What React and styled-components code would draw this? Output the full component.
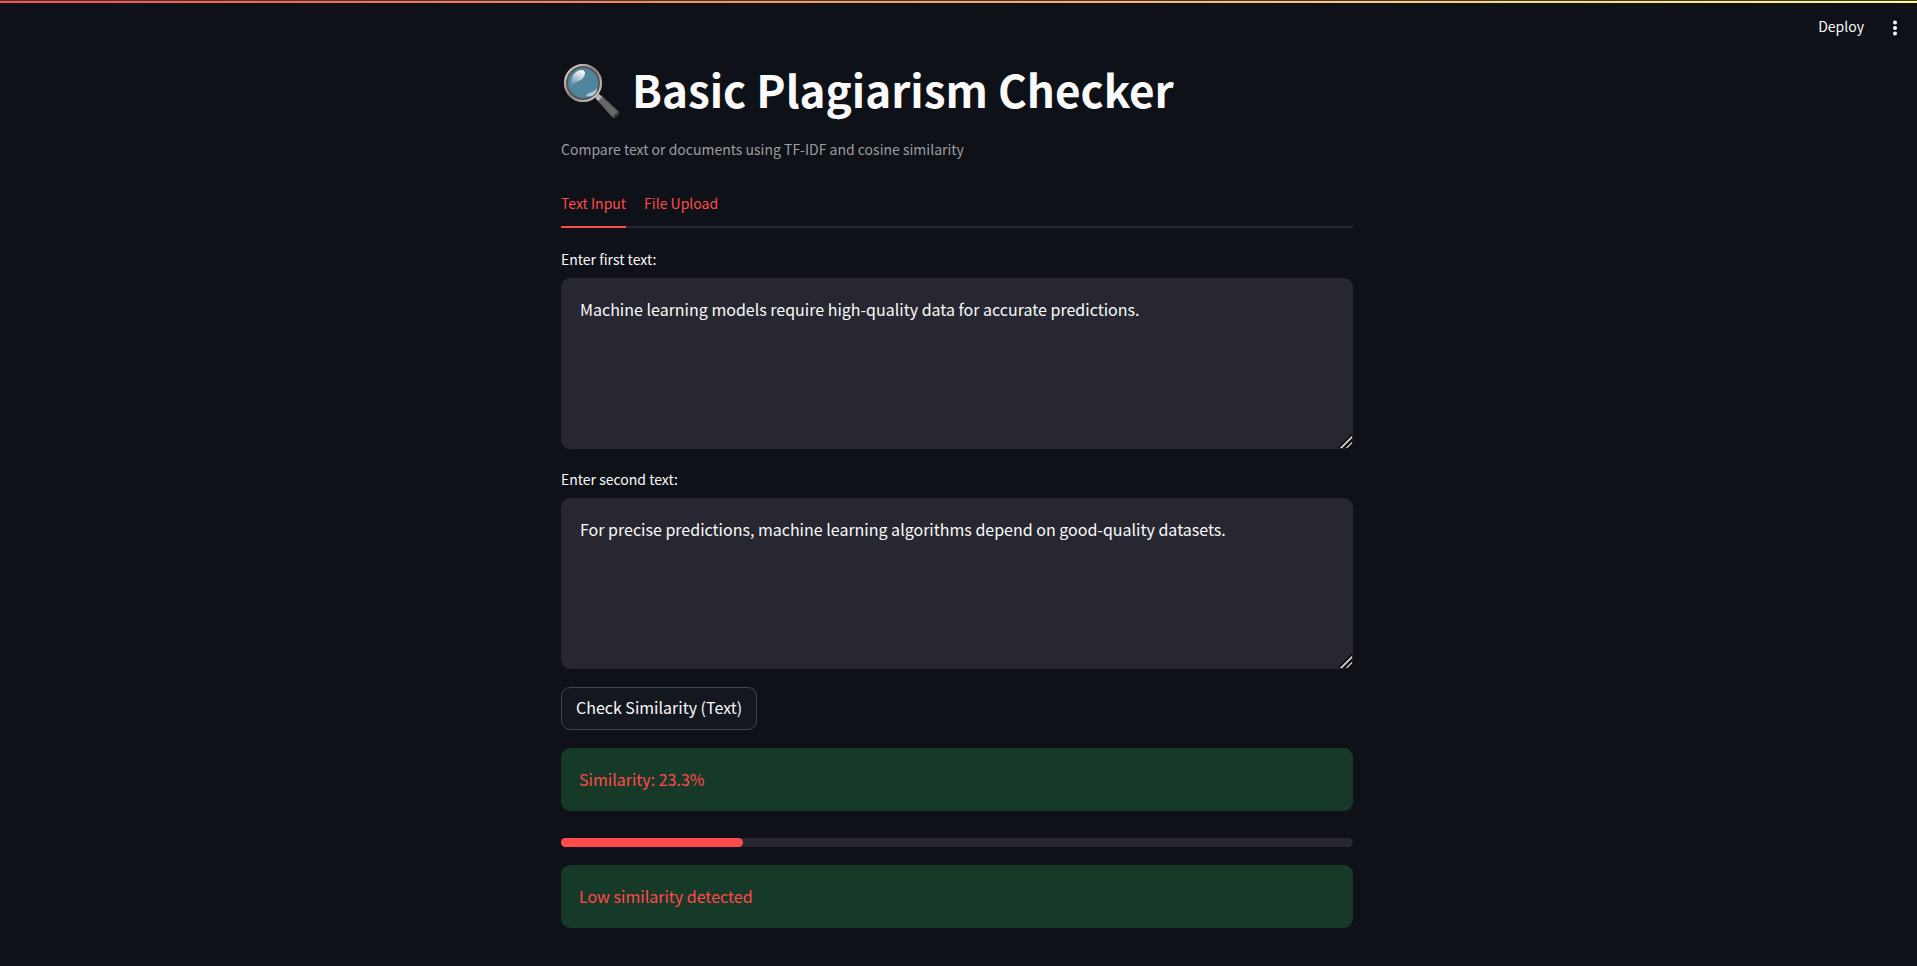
import React, { useState } from "react";
import styled, { createGlobalStyle } from "styled-components";

const Global = createGlobalStyle`
  *, *::before, *::after { box-sizing: border-box; }
  html { color-scheme: dark; background: #0e1117; }
  body {
    margin: 0;
    background: #0e1117;
    color: #fafafa;
    font-family: "Noto Sans CJK SC", sans-serif;
    font-size: 16px;
    line-height: 28px;
  }
  button, textarea { font: inherit; color: inherit; }
`;

const Decoration = styled.div`
  height: 3px;
  border-top: 1px solid #3b3b3f;
  background: linear-gradient(90deg, #ff4b4b, #fffd80);
`;

const Header = styled.header`
  display: flex;
  align-items: center;
  justify-content: flex-end;
  gap: 23px;
  height: 46px;
  padding-right: 14px;
`;

const HeaderButton = styled.button`
  display: flex;
  align-items: center;
  justify-content: center;
  padding: 0;
  border: 0;
  background: none;
  font-size: 14px;
  line-height: 24px;
  cursor: pointer;
`;

const Page = styled.main`
  width: 100%;
  max-width: 795px;
  margin: 0 auto;
  padding: 0 3px 38px 0;
`;

const Title = styled.h1`
  display: flex;
  align-items: flex-end;
  gap: 10px;
  margin: 0;
  padding: 10px 0 0 3px;
  font-size: 44px;
  font-weight: 700;
  line-height: 60px;
`;

const Caption = styled.p`
  margin: 18px 0 0;
  color: #9c9da0;
  font-size: 14px;
  line-height: 24px;
`;

const TabList = styled.div`
  display: flex;
  gap: 18px;
  margin: 18px 0 19px;
  border-bottom: 2px solid #262730;
`;

const Tab = styled.button`
  height: 49px;
  margin-bottom: -2px;
  padding: 0;
  border: 0;
  border-bottom: 2px solid ${(p) => (p.$active ? "#ff4b4b" : "transparent")};
  background: none;
  color: #ff4b4b;
  font-size: 14px;
  cursor: pointer;
`;

const Stack = styled.div`
  display: flex;
  flex-direction: column;
  align-items: stretch;
  gap: 18px;
`;

const Field = styled.div`
  display: flex;
  flex-direction: column;
  gap: 7px;
`;

const Label = styled.label`
  font-size: 14px;
  line-height: 24px;
`;

const TextArea = styled.textarea`
  display: block;
  width: 100%;
  height: 171px;
  padding: 16px 18px;
  border: 1px solid #262730;
  border-radius: 9px;
  outline: 0;
  background: #262730;
  resize: vertical;

  &::-webkit-resizer {
    background: linear-gradient(
      135deg,
      transparent 0 51%,
      #0b0b0d 51% 57%,
      #b4b4b6 57% 67%,
      #0b0b0d 67% 77%,
      #b4b4b6 77% 85%,
      transparent 85%
    );
  }
`;

const ActionButton = styled.button`
  align-self: flex-start;
  height: 43px;
  padding: 0 14px 3px;
  border: 1px solid #41444c;
  border-radius: 9px;
  background: #131720;
  cursor: pointer;
`;

const Alert = styled.div`
  padding: 18px;
  border-radius: 9px;
  background: #173928;
  color: #ff4b4b;
  line-height: 27px;
`;

const Progress = styled.div`
  height: 9px;
  margin-top: 9px;
  border-radius: 5px;
  background: #262730;
`;

const ProgressFill = styled.div`
  height: 100%;
  border-radius: 5px;
  background: #ff4b4b;
`;

const MagnifierIcon = () => (
  <svg width="58" height="56" viewBox="0 0 58 56" role="img" aria-label="Magnifying glass">
    <defs>
      <linearGradient id="rim" x1="0" y1="0" x2="1" y2="1">
        <stop offset="0" stopColor="#e4e4e4" />
        <stop offset="0.5" stopColor="#8a8583" />
        <stop offset="1" stopColor="#d6d6d6" />
      </linearGradient>
      <linearGradient id="shine" x1="0.7" y1="0" x2="0.2" y2="1">
        <stop offset="0" stopColor="#ffffff" />
        <stop offset="1" stopColor="#ffffff" stopOpacity="0.1" />
      </linearGradient>
      <linearGradient id="handle" x1="0" y1="1" x2="1" y2="0">
        <stop offset="0" stopColor="#3c3c3c" />
        <stop offset="0.5" stopColor="#6a6a6a" />
        <stop offset="1" stopColor="#454545" />
      </linearGradient>
    </defs>
    <path d="M32 36 L37 32 L55 49 Q55 53 49 55 Z" fill="url(#handle)" />
    <path d="M49 55 Q50 50 55 49 Q55 54 49 55Z" fill="#3a3a3a" />
    <path d="M30 33 L34 30 L38 34 L34 38Z" fill="#b9b9b9" />
    <circle cx="19" cy="20" r="17" fill="#50859f" stroke="#5c5654" strokeWidth="4" />
    <circle cx="19" cy="20" r="18" fill="none" stroke="url(#rim)" strokeWidth="2" />
    <path d="M7 23 C6 14 11 7 18 7 C23 8 21 14 17 17 C13 19 10 20 7 23Z" fill="url(#shine)" />
    <path d="M22 33 C24 29 30 30 33 25 C33 31 28 35 22 33Z" fill="#b8dbe8" opacity="0.85" />
  </svg>
);

const MenuDots = () => (
  <svg width="16" height="20" viewBox="0 0 16 20" fill="#fafafa" aria-hidden="true">
    <circle cx="8" cy="6.5" r="2" />
    <circle cx="8" cy="12" r="2" />
    <circle cx="8" cy="17.5" r="2" />
  </svg>
);

export default function App() {
  const [first, setFirst] = useState(
    "Machine learning models require high-quality data for accurate predictions."
  );
  const [second, setSecond] = useState(
    "For precise predictions, machine learning algorithms depend on good-quality datasets."
  );
  const score = 23;

  return (
    <>
      <Global />
      <Decoration />
      <Header>
        <HeaderButton type="button">Deploy</HeaderButton>
        <HeaderButton type="button" aria-label="Main menu">
          <MenuDots />
        </HeaderButton>
      </Header>
      <Page>
        <Title>
          <MagnifierIcon />
          Basic Plagiarism Checker
        </Title>
        <Caption>Compare text or documents using TF-IDF and cosine similarity</Caption>
        <TabList role="tablist">
          <Tab type="button" role="tab" aria-selected="true" $active>Text Input</Tab>
          <Tab type="button" role="tab" aria-selected="false">File Upload</Tab>
        </TabList>
        <Stack>
          <Field>
            <Label htmlFor="first">Enter first text:</Label>
            <TextArea id="first" spellCheck={false} value={first} onChange={(e) => setFirst(e.target.value)} />
          </Field>
          <Field>
            <Label htmlFor="second">Enter second text:</Label>
            <TextArea id="second" spellCheck={false} value={second} onChange={(e) => setSecond(e.target.value)} />
          </Field>
          <ActionButton type="button">Check Similarity (Text)</ActionButton>
          <Alert role="alert">Similarity: 23.3%</Alert>
          <Progress role="progressbar" aria-label="Similarity score" aria-valuenow={score} aria-valuemin={0} aria-valuemax={100}>
            <ProgressFill style={{ width: `${score}%` }} />
          </Progress>
          <Alert role="alert">Low similarity detected</Alert>
        </Stack>
      </Page>
    </>
  );
}
